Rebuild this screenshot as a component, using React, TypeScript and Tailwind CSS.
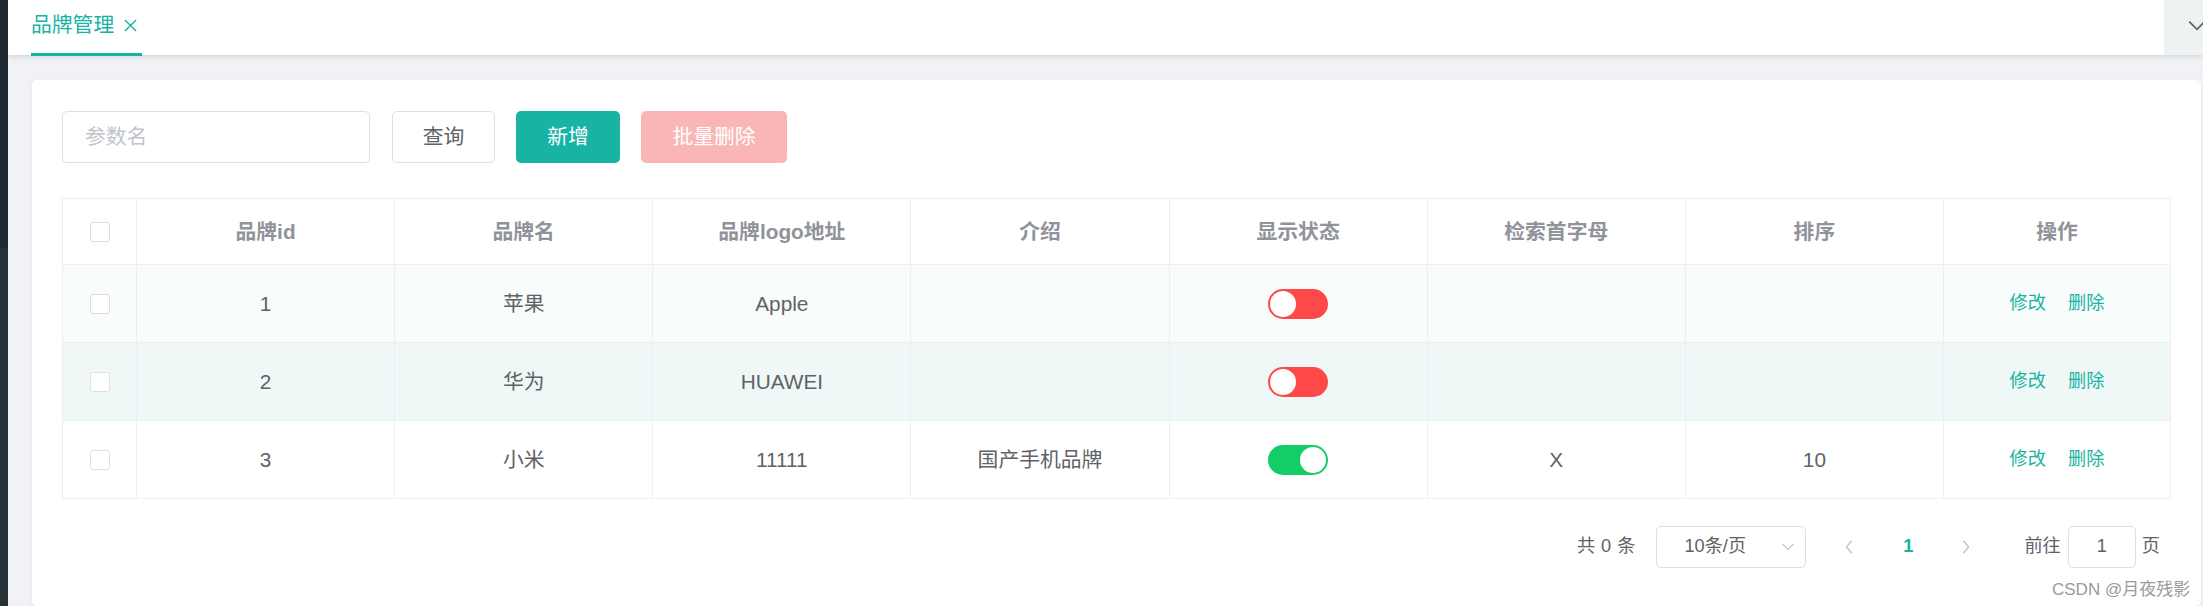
import React from 'react';

const TEAL = '#17b3a3';

type Brand = {
  id: number;
  name: string;
  logo: string;
  intro: string;
  show: boolean;
  letter: string;
  sort: string;
};

const BRANDS: Brand[] = [
  { id: 1, name: '苹果', logo: 'Apple', intro: '', show: false, letter: '', sort: '' },
  { id: 2, name: '华为', logo: 'HUAWEI', intro: '', show: false, letter: '', sort: '' },
  { id: 3, name: '小米', logo: '11111', intro: '国产手机品牌', show: true, letter: 'X', sort: '10' },
];

const rowBg = ['bg-[#f8fcfb]', 'bg-[#f0f8f7]', 'bg-white'];

const Checkbox = () => (
  <span className="block w-[20px] h-[20px] rounded-[3px] border border-[#dcdfe6] bg-white" />
);

const Switch = ({ on }: { on: boolean }) => (
  <span
    className={`relative block w-[60px] h-[30px] rounded-full ${on ? 'bg-[#13ce66]' : 'bg-[#ff4949]'}`}
  >
    <span
      className={`absolute top-[2px] w-[26px] h-[26px] rounded-full bg-white ${on ? 'right-[2px]' : 'left-[2px]'}`}
    />
  </span>
);

const Chevron = ({ dir, className }: { dir: 'down' | 'left' | 'right'; className?: string }) => {
  const d =
    dir === 'down' ? 'M2 5 L9 12 L16 5' : dir === 'left' ? 'M11 2 L5 9 L11 16' : 'M6 2 L12 9 L6 16';
  return (
    <svg viewBox="0 0 18 18" className={className} fill="none" stroke="currentColor" strokeWidth="1.6">
      <path d={d} />
    </svg>
  );
};

const Cell = ({ children, className = '' }: { children?: React.ReactNode; className?: string }) => (
  <div className={`flex items-center justify-center border-r border-[#ebeef5] last:border-r-0 ${className}`}>
    {children}
  </div>
);

const cols = 'grid grid-cols-[74px_repeat(7,minmax(0,1fr))_226px]';

const App: React.FC = () => {
  const heads = ['品牌id', '品牌名', '品牌logo地址', '介绍', '显示状态', '检索首字母', '排序', '操作'];

  return (
    <div
      className="relative flex w-full h-[606px] overflow-hidden bg-[#f0f2f5] text-[#606266]"
      style={{ fontFamily: '"Liberation Sans", "Noto Sans CJK SC", sans-serif' }}
    >
      {/* Sidebar edge */}
      <div className="w-[8px] shrink-0 flex flex-col">
        <div className="h-[248px] bg-[#1f2a30]" />
        <div className="flex-1 bg-[#263238]" />
      </div>

      <div className="flex-1 min-w-0 flex flex-col">
        {/* Tabs bar */}
        <div className="h-[55px] shrink-0 flex bg-white shadow-[0_2px_6px_rgba(0,0,0,0.12)] relative z-10">
          <div className="flex-1 flex items-stretch pl-[23px]">
            <div className="relative flex items-center gap-[10px] pr-[5px] pb-[4px]" style={{ color: TEAL }}>
              <span className="text-[20.8px] leading-none">品牌管理</span>
              <svg viewBox="0 0 14 14" className="w-[13px] h-[13px]" fill="none" stroke="currentColor" strokeWidth="1.5">
                <path d="M1 1 L13 13 M13 1 L1 13" />
              </svg>
              <span className="absolute left-0 right-0 bottom-[-1px] h-[3px]" style={{ background: TEAL }} />
            </div>
          </div>
          <div className="w-[39px] bg-[#eff2f3] flex items-center justify-end text-[#606266]">
            <Chevron dir="down" className="w-[20px] h-[20px] mr-[-4px] mt-[-3px]" />
          </div>
        </div>

        {/* Content */}
        <div className="flex-1 min-h-0 pl-[24px] pr-[2px] pt-[25px]">
          <div className="h-full bg-white rounded-[5px] shadow-[0_1px_4px_rgba(0,0,0,0.06)] px-[30px] pt-[31px]">
            {/* Toolbar */}
            <div className="flex items-center h-[52px] text-[20.8px]">
              <div className="w-[308px] h-full rounded-[5px] border border-[#dcdfe6] flex items-center pl-[22px] text-[#c0c4cc]">
                参数名
              </div>
              <button className="ml-[22px] w-[103px] h-full rounded-[5px] border border-[#dcdfe6] bg-white text-[#606266]">
                查询
              </button>
              <button className="ml-[21px] w-[104px] h-full rounded-[5px] text-white" style={{ background: TEAL }}>
                新增
              </button>
              <button className="ml-[21px] w-[146px] h-full rounded-[5px] bg-[#fab6b6] text-white">
                批量删除
              </button>
            </div>

            {/* Table */}
            <div className="mt-[35px] border border-[#ebeef5] text-[20.8px]">
              <div className={`${cols} h-[65px] font-bold text-[#909399]`}>
                <Cell>
                  <Checkbox />
                </Cell>
                {heads.map((h) => (
                  <Cell key={h}>{h}</Cell>
                ))}
              </div>
              {BRANDS.map((b, i) => (
                <div key={b.id} className={`${cols} h-[78px] border-t border-[#ebeef5] ${rowBg[i]}`}>
                  <Cell>
                    <Checkbox />
                  </Cell>
                  <Cell>{b.id}</Cell>
                  <Cell>{b.name}</Cell>
                  <Cell>{b.logo}</Cell>
                  <Cell>{b.intro}</Cell>
                  <Cell>
                    <Switch on={b.show} />
                  </Cell>
                  <Cell>{b.letter}</Cell>
                  <Cell>{b.sort}</Cell>
                  <Cell>
                    <div className="flex gap-[22px] text-[18.2px]" style={{ color: TEAL }}>
                      <span>修改</span>
                      <span>删除</span>
                    </div>
                  </Cell>
                </div>
              ))}
            </div>

            {/* Pagination */}
            <div className="mt-[27px] h-[42px] flex items-center justify-end pr-[11px] text-[18.2px] text-[#606266]">
              <span className="flex gap-[6px]">
                <span>共</span>
                <span>0</span>
                <span>条</span>
              </span>
              <div className="ml-[21px] w-[150px] h-full rounded-[5px] border border-[#dcdfe6] flex items-center pl-[27px] pr-[10px]">
                <span className="flex-1">10条/页</span>
                <Chevron dir="down" className="w-[14px] h-[14px] text-[#c0c4cc]" />
              </div>
              <div className="ml-[15px] flex items-center">
                <span className="w-[58px] flex justify-center text-[#c0c4cc]">
                  <Chevron dir="left" className="w-[16px] h-[16px]" />
                </span>
                <span className="w-[58px] flex justify-center font-bold" style={{ color: TEAL }}>
                  1
                </span>
                <span className="w-[58px] flex justify-center text-[#c0c4cc]">
                  <Chevron dir="right" className="w-[16px] h-[16px]" />
                </span>
              </div>
              <span className="ml-[29px]">前往</span>
              <div className="ml-[7px] w-[68px] h-full rounded-[5px] border border-[#dcdfe6] flex items-center justify-center">
                1
              </div>
              <span className="ml-[6px]">页</span>
            </div>
          </div>
        </div>
      </div>

      {/* Watermark */}
      <span className="absolute left-[2052px] top-[577px] text-[17px] text-[#9a9a9a] whitespace-nowrap">
        CSDN @月夜残影
      </span>
    </div>
  );
};

export default App;
